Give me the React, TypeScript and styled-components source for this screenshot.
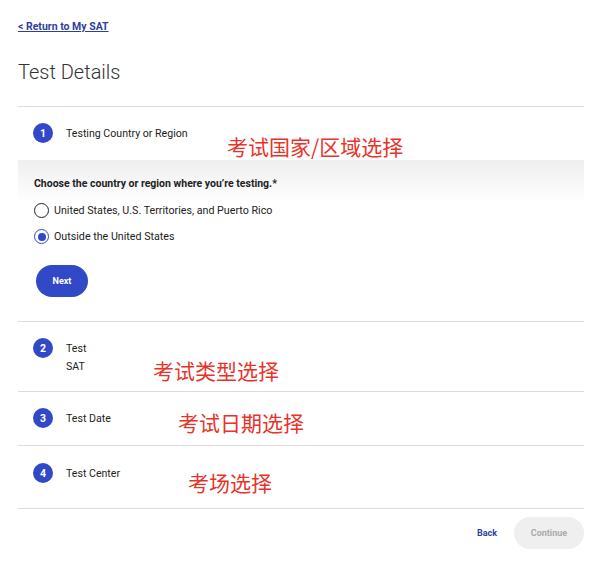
import styled, { createGlobalStyle } from 'styled-components';

const BLUE = '#3149c6';

const GlobalStyle = createGlobalStyle`
  body {
    margin: 0;
    background: #fff;
    font-family: Roboto, "Liberation Sans", "Noto Sans CJK SC", sans-serif;
    color: #222;
  }
`;

const Page = styled.div`
  padding: 20px 24px 0 18px;
`;

const BackLink = styled.a`
  display: block;
  font-size: 10.5px;
  font-weight: 700;
  color: #2d3f9e;
  text-decoration: underline;
  line-height: 14px;
`;

const Title = styled.h1`
  margin: 26px 0 0;
  font-size: 20px;
  font-weight: 300;
  line-height: 24px;
  color: #333;
`;

const StepList = styled.div`
  margin-top: 22px;
  border-top: 1px solid #dcdcdc;
`;

const Step = styled.section<{ $bottom?: number }>`
  position: relative;
  border-bottom: 1px solid #dcdcdc;
  padding-bottom: ${(p) => p.$bottom ?? 0}px;
`;

const StepHead = styled.div<{ $top?: number; $bottom: number }>`
  display: flex;
  align-items: flex-start;
  gap: 13px;
  padding: ${(p) => p.$top ?? 16}px 0 ${(p) => p.$bottom}px 15px;
`;

const Badge = styled.span`
  flex: none;
  width: 20px;
  height: 20px;
  border-radius: 50%;
  background: ${BLUE};
  color: #fff;
  font-size: 10.5px;
  font-weight: 700;
  display: flex;
  align-items: center;
  justify-content: center;
`;

const StepText = styled.div`
  font-size: 10.6px;
  line-height: 18px;
  padding-top: 2px;
  margin-bottom: -1px;
  color: #222;
`;

const Note = styled.span<{ $left: number; $top: number }>`
  position: absolute;
  left: ${(p) => p.$left}px;
  top: ${(p) => p.$top}px;
  font-family: "Noto Sans CJK SC", sans-serif;
  font-size: 21px;
  line-height: 24px;
  color: #e8332a;
  white-space: nowrap;
`;

const Panel = styled.div`
  background: linear-gradient(#efefef 0px, #fafafa 30px, #fff 42px);
  padding: 17px 16px 24px;
`;

const Question = styled.div`
  font-size: 10.5px;
  font-weight: 700;
  line-height: 14px;
  color: #222;
`;

const Options = styled.div`
  margin-top: 12px;
  display: flex;
  flex-direction: column;
  gap: 11px;
`;

const Option = styled.label`
  display: flex;
  align-items: center;
  gap: 5px;
  font-size: 10.7px;
  line-height: 14px;
  color: #222;
`;

const Radio = styled.span<{ $checked?: boolean }>`
  box-sizing: border-box;
  width: 15px;
  height: 15px;
  border-radius: 50%;
  border: 1.3px solid ${(p) => (p.$checked ? BLUE : '#222')};
  display: flex;
  align-items: center;
  justify-content: center;
  &::after {
    content: '';
    width: 8px;
    height: 8px;
    border-radius: 50%;
    background: ${(p) => (p.$checked ? BLUE : 'transparent')};
  }
`;

const PillButton = styled.button<{ $disabled?: boolean }>`
  border: none;
  border-radius: 16px;
  height: 32px;
  font-family: inherit;
  font-size: 9px;
  font-weight: 700;
  background: ${(p) => (p.$disabled ? '#efefef' : BLUE)};
  color: ${(p) => (p.$disabled ? '#aaa' : '#fff')};
`;

const NextButton = styled(PillButton)`
  margin-top: 21px;
  margin-left: 2px;
  width: 52px;
`;

const Footer = styled.div`
  display: flex;
  justify-content: flex-end;
  align-items: center;
  gap: 17px;
  padding-top: 8px;
`;

const TextButton = styled.button`
  border: none;
  background: none;
  padding: 0;
  font-family: inherit;
  font-size: 9px;
  font-weight: 700;
  color: #2d3f9e;
`;

const ContinueButton = styled(PillButton)`
  width: 70px;
  height: 32px;
`;

export default function App() {
  return (
    <>
      <GlobalStyle />
      <Page>
        <BackLink>&lt; Return to My SAT</BackLink>
        <Title>Test Details</Title>
        <StepList>
          <Step>
            <StepHead $bottom={17}>
              <Badge>1</Badge>
              <StepText>Testing Country or Region</StepText>
            </StepHead>
            <Note $left={209} $top={27}>考试国家/区域选择</Note>
            <Panel>
              <Question>Choose the country or region where you’re testing.*</Question>
              <Options>
                <Option>
                  <Radio />
                  United States, U.S. Territories, and Puerto Rico
                </Option>
                <Option>
                  <Radio $checked />
                  Outside the United States
                </Option>
              </Options>
              <NextButton>Next</NextButton>
            </Panel>
          </Step>
          <Step>
            <StepHead $bottom={16}>
              <Badge>2</Badge>
              <StepText>
                Test
                <br />
                SAT
              </StepText>
            </StepHead>
            <Note $left={135} $top={36}>考试类型选择</Note>
          </Step>
          <Step>
            <StepHead $bottom={17}>
              <Badge>3</Badge>
              <StepText>Test Date</StepText>
            </StepHead>
            <Note $left={160} $top={18}>考试日期选择</Note>
          </Step>
          <Step $bottom={9}>
            <StepHead $top={17} $bottom={16}>
              <Badge>4</Badge>
              <StepText>Test Center</StepText>
            </StepHead>
            <Note $left={170} $top={24}>考场选择</Note>
          </Step>
        </StepList>
        <Footer>
          <TextButton>Back</TextButton>
          <ContinueButton $disabled>Continue</ContinueButton>
        </Footer>
      </Page>
    </>
  );
}
